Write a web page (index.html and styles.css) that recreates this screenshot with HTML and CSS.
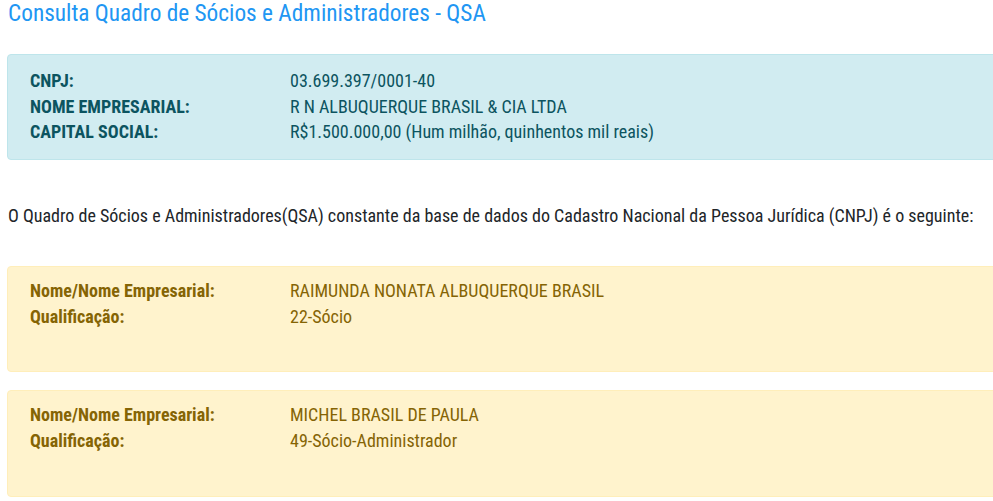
FILE: index.html
```html
<!DOCTYPE html>
<html lang="pt-BR">
<head>
<meta charset="utf-8">
<title>Consulta QSA</title>
<link rel="stylesheet" href="styles.css">
</head>
<body>
<div class="page">
  <h1 class="title">Consulta Quadro de Sócios e Administradores - QSA</h1>

  <div class="alert alert-info">
    <dl class="fields">
      <dt>CNPJ:</dt><dd>03.699.397/0001-40</dd>
      <dt>NOME EMPRESARIAL:</dt><dd>R N ALBUQUERQUE BRASIL &amp; CIA LTDA</dd>
      <dt>CAPITAL SOCIAL:</dt><dd>R$1.500.000,00 (Hum milhão, quinhentos mil reais)</dd>
    </dl>
  </div>

  <p class="intro">O Quadro de Sócios e Administradores(QSA) constante da base de dados do Cadastro Nacional da Pessoa Jurídica (CNPJ) é o seguinte:</p>

  <div class="alert alert-warning">
    <dl class="fields">
      <dt>Nome/Nome Empresarial:</dt><dd>RAIMUNDA NONATA ALBUQUERQUE BRASIL</dd>
      <dt>Qualificação:</dt><dd>22-Sócio</dd>
    </dl>
  </div>

  <div class="alert alert-warning">
    <dl class="fields">
      <dt>Nome/Nome Empresarial:</dt><dd>MICHEL BRASIL DE PAULA</dd>
      <dt>Qualificação:</dt><dd>49-Sócio-Administrador</dd>
    </dl>
  </div>
</div>
</body>
</html>
```

FILE: styles.css
```css
html {
  overflow: hidden;
}

body {
  margin: 0;
  font-family: "Roboto Condensed", Roboto, "Liberation Sans", sans-serif;
  color: #212529;
  background: #fff;
}

.page {
  width: 1040px;
  padding-left: 7px;
}

.title {
  margin: 0 0 0 1px;
  font-size: 23.3px;
  font-weight: 400;
  line-height: 27px;
  color: #2196f3;
}

.alert {
  border: 1px solid transparent;
  border-radius: 4px;
}

.alert-info {
  margin-top: 27px;
  padding: 13px 22px 14px;
  background: #d1ecf1;
  border-color: #bee5eb;
  color: #0c5460;
}

.alert-warning {
  padding: 11px 22px 42px;
  background: #fff3cd;
  border-color: #ffeeba;
  color: #856404;
  margin-bottom: 18px;
}

.fields {
  display: grid;
  grid-template-columns: 260px 1fr;
  margin: 0;
  font-size: 18px;
  line-height: 25.7px;
}

.fields dt {
  font-weight: 700;
}

.fields dd {
  margin: 0;
}

.intro {
  margin: 43px 0 37px 1px;
  font-size: 18px;
  line-height: 25.7px;
  color: #212529;
}
```
